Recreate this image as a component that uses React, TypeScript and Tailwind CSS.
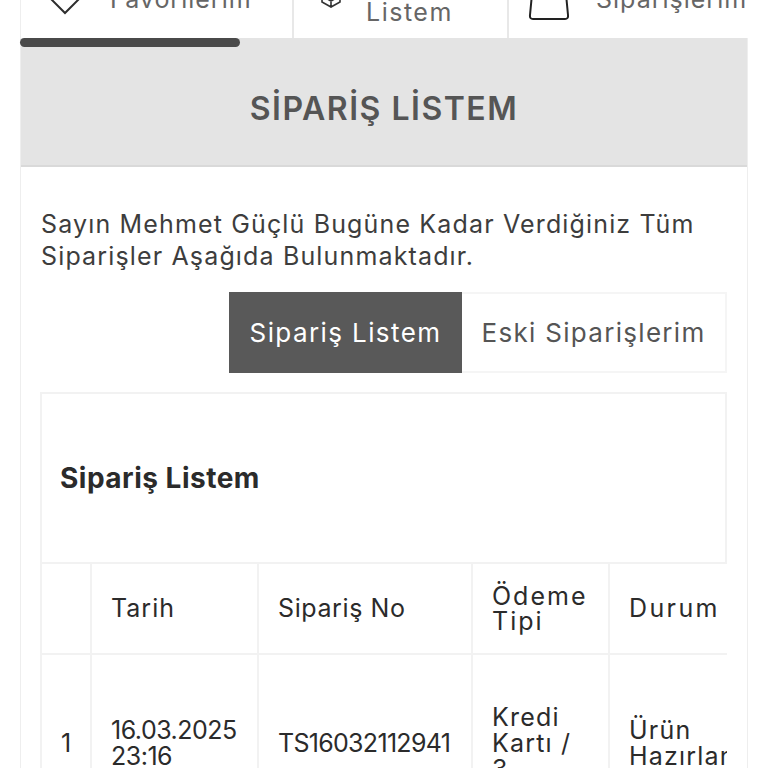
import React from 'react';

const font = 'font-["Inter","Open_Sans",sans-serif]';

const Cell = ({ children, className = '' }: { children: React.ReactNode; className?: string }) => (
  <div className={`flex items-center overflow-hidden border-l-2 border-[#f2f2f2] pl-[19px] text-[25px] text-[#2b2b2b] ${className}`}>
    {children}
  </div>
);

export default function App() {
  return (
    <div className={`relative h-[768px] w-[768px] overflow-hidden bg-white ${font}`}>
      {/* tabs, scrolled off the top */}
      <div className="mx-[20px] flex h-[38px] items-end overflow-hidden border-l border-[#eeeeee]">
        <div className="flex h-full w-[273px] shrink-0 items-end border-r-2 border-[#e8e8e8] pl-[25px]">
          <svg width="38" height="20" viewBox="0 0 38 20" fill="none" stroke="#2e2e2e" strokeWidth="2" className="mb-[21px]">
            <path d="M1 -2 L19 16 L37 -2" />
          </svg>
          <span className="mb-[26px] ml-[26px] text-[25px] leading-[26px] tracking-[1px] text-[#666666]">Favorilerim</span>
        </div>
        <div className="flex h-full w-[215px] shrink-0 items-end border-r-2 border-[#e8e8e8] pl-[26px]">
          <svg width="22" height="14" viewBox="0 0 22 14" fill="none" stroke="#333333" strokeWidth="1.6" className="mb-[29px]">
            <path d="M2 -2 V7 L11 12 L20 7 V-2 M2 1 L11 6 L20 1 M11 6 V12" />
          </svg>
          <span className="mb-[13px] ml-[24px] text-[25px] leading-[26px] tracking-[1.5px] text-[#666666]">Listem</span>
        </div>
        <div className="flex h-full flex-1 items-end pl-[18px]">
          <svg width="44" height="24" viewBox="0 0 44 24" fill="none" stroke="#222222" strokeWidth="2" className="mb-[16px]">
            <path d="M5 -4 L3 17 Q2.5 21 6 21 H38 Q41.5 21 41 17 L39 -4" />
          </svg>
          <span className="mb-[26px] ml-[25px] whitespace-nowrap text-[25px] leading-[26px] tracking-[1px] text-[#666666]">Siparişlerim</span>
        </div>
      </div>

      {/* scrollbar thumb */}
      <div className="absolute left-[20px] top-[38px] h-[9px] w-[220px] rounded-full bg-[#4a4a4a]" />

      <div className="mx-[20px] h-[730px] border-x border-[#eeeeee]">
        <div className="flex h-[129px] items-center justify-center border-b-2 border-[#d9d9d9] bg-[#e4e4e4] pt-[14px]">
          <h1 className="text-[32px] font-semibold tracking-[1.5px] text-[#555555]">SİPARİŞ LİSTEM</h1>
        </div>

        <div className="pl-[19px] pr-[20px] pt-[41px]">
          <p className="pl-[1px] text-[25px] leading-[32px] tracking-[1.15px] text-[#3d3d3d]">
            Sayın Mehmet Güçlü Bugüne Kadar Verdiğiniz Tüm Siparişler Aşağıda Bulunmaktadır.
          </p>

          <div className="mt-[20px] flex h-[81px] justify-end">
            <div className="flex w-[233px] items-center justify-center bg-[#595959] text-[26px] tracking-[1.4px] text-white">Sipariş Listem</div>
            <div className="flex w-[265px] items-center justify-center border-y-2 border-r-2 border-[#f5f5f5] text-[26px] tracking-[1.3px] text-[#555555]">Eski Siparişlerim</div>
          </div>

          <div className="mt-[19px] flex h-[170px] items-center border-2 border-b-0 border-[#f2f2f2] pl-[18px]">
            <h2 className="text-[28px] font-bold tracking-[0.5px] text-[#2b2b2b]">Sipariş Listem</h2>
          </div>

          <div className="grid grid-cols-[50px_167px_214px_137px_119px] grid-rows-[91px_176px] overflow-hidden border-t-2 border-[#f2f2f2]">
            <Cell className="border-b-2 leading-[25px]">{''}</Cell>
            <Cell className="border-b-2 leading-[25px] tracking-[1px]">Tarih</Cell>
            <Cell className="border-b-2 leading-[25px] tracking-[0.6px]">Sipariş No</Cell>
            <Cell className="border-b-2 leading-[25px] tracking-[2px]">Ödeme Tipi</Cell>
            <Cell className="border-b-2 whitespace-nowrap leading-[25px] tracking-[2.4px]">Durum</Cell>
            <Cell className="leading-[26px]">1</Cell>
            <Cell className="leading-[26px] tracking-[-0.5px]">16.03.2025 23:16</Cell>
            <Cell className="leading-[26px] tracking-[-0.7px]">TS16032112941</Cell>
            <Cell className="leading-[26px] tracking-[1.2px]">
              <span className="w-[90px] shrink-0">Kredi Kartı / 3</span>
            </Cell>
            <Cell className="leading-[26px] tracking-[1.2px]">
              <span className="w-[160px] shrink-0">Ürün Hazırlanıyor</span>
            </Cell>
          </div>
        </div>
      </div>
    </div>
  );
}
